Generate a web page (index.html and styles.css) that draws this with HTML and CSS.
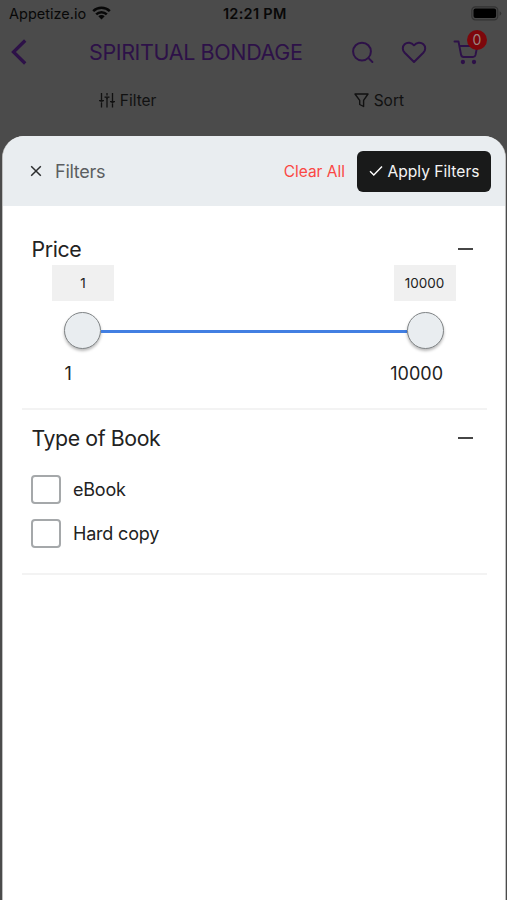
FILE: index.html
```html
<!DOCTYPE html>
<html lang="en">
<head>
<meta charset="utf-8">
<meta name="viewport" content="width=device-width, initial-scale=1">
<title>Spiritual Bondage – Filters</title>
<link rel="stylesheet" href="styles.css">
</head>
<body>
<div class="screen">
  <div class="status">
    <div class="carrier"><span class="carrier-name">Appetize.io</span>
      <svg class="wifi" width="19" height="14" viewBox="0 0 19 14" fill="none" stroke="#080808" stroke-width="2.5"><path d="M1.2 5.2a11.8 11.8 0 0 1 16.6 0M4.2 8.4a7.5 7.5 0 0 1 10.6 0"/><path d="M9.5 13.5 6.3 10.3a4.5 4.5 0 0 1 6.4 0z" fill="#080808" stroke="none"/></svg>
    </div>
    <span class="clock">12:21 PM</span>
    <svg class="battery" width="31" height="15" viewBox="0 0 31 15"><rect x=".8" y=".8" width="26" height="13" rx="3.6" fill="#484848" stroke="#333" stroke-width="1.2"/><rect x="2.5" y="2.6" width="22.6" height="9.4" rx="2" fill="#000"/><path d="M28.6 5.2v4.6q1.7-.8 1.7-2.3t-1.7-2.3z" fill="#333"/></svg>
  </div>
  <div class="nav">
    <svg class="back" width="18" height="28" viewBox="0 0 18 28" fill="none" stroke="#2d1148" stroke-width="3.3"><path d="M15.2 2.5 3.5 14l11.7 11.5"/></svg>
    <h1 class="title">SPIRITUAL BONDAGE</h1>
    <div class="actions">
      <svg width="24" height="24" viewBox="0 0 24 24" fill="none" stroke="#2d1148" stroke-width="2" stroke-linecap="round"><circle cx="11" cy="11.6" r="8.9"/><path d="m17.500 18.100 3.900 3.900"/></svg>
      <svg width="26" height="24" viewBox="0 0 26 24" fill="none" stroke="#2d1148" stroke-width="2" stroke-linejoin="round"><path d="m13 22-9.300-9.200C1.200 10.200 1.200 6.500 3.600 4.300 6.300 1.800 10.500 2.300 13 5.300c2.500-3 6.700-3.500 9.400-1 2.400 2.200 2.400 5.900-.1 8.500z"/></svg>
      <div class="cart">
        <svg width="26" height="26" viewBox="0 0 26 26" fill="none" stroke="#2d1148" stroke-width="1.900" stroke-linecap="round" stroke-linejoin="round"><path d="M1.500 2.500H5.500L8 15.500q.5 2.500 2.500 2.500H20q2 0 2.500-2l1.800-9H6.400"/><circle cx="9.900" cy="23" r="1.200" fill="#2d1148"/><circle cx="21" cy="23" r="1.200" fill="#2d1148"/></svg>
        <span class="badge">0</span>
      </div>
    </div>
  </div>
  <div class="tools">
    <div class="tool">
      <svg width="16" height="15" viewBox="0 0 16 15" fill="none" stroke="#111" stroke-width="1.300"><path d="M2.500 0v7.500M2.500 10v4.500M8 0v2.500M8 5v9.500M13.500 0v8M13.500 10.500v4M0 7.700h5M5.500 4.200h5M11 8.700h5"/><path d="M1 8.200h3L2.500 10zM6.500 4.500h3L8 6.300zM12 9h3l-1.500 1.800z" fill="#111" stroke="none"/></svg>
      <span class="filter-text">Filter</span>
    </div>
    <div class="tool">
      <svg width="15" height="15" viewBox="0 0 15 15" fill="none" stroke="#111" stroke-width="1.400" stroke-linejoin="round"><path d="M1 1h13L9.600 7.300v6.200L5.700 11.500V7.300z"/></svg>
      <span class="sort-text">Sort</span>
    </div>
  </div>
  <main class="sheet">
    <header class="head">
      <svg class="close" width="12" height="12" viewBox="0 0 12 12" fill="none" stroke="#2b2d2e" stroke-width="1.500"><path d="m1.200 1.200 9.600 9.600M10.800 1.200l-9.600 9.600"/></svg>
      <span class="head-title">Filters</span>
      <span class="clear">Clear All</span>
      <div class="apply">
        <svg width="14" height="12" viewBox="0 0 14 12" fill="none" stroke="#fff" stroke-width="1.400"><path d="m1 6.300 3.800 3.800L13 1.500"/></svg>
        <span class="apply-text">Apply Filters</span>
      </div>
    </header>
    <section class="price">
      <div class="section-head"><h2 class="price-title">Price</h2><i class="minus"></i></div>
      <div class="range-values"><span class="value">1</span><span class="value">10000</span></div>
      <div class="slider"><i class="thumb"></i><i class="track"></i><i class="thumb"></i></div>
      <div class="range-labels"><span>1</span><span class="max-label">10000</span></div>
    </section>
    <section class="types">
      <div class="section-head"><h2 class="type-title">Type of Book</h2><i class="minus"></i></div>
      <div class="option"><i class="box"></i><span class="ebook">eBook</span></div>
      <div class="option"><i class="box"></i><span class="hard">Hard copy</span></div>
    </section>
  </main>
</div>
</body>
</html>
```
FILE: styles.css
```css
* { box-sizing: border-box; }
body { margin: 0; background: #4b4b4b; font-family: Inter, "Liberation Sans", sans-serif; }
h1, h2 { margin: 0; font-weight: 400; }
svg { display: block; flex: none; }
span, h1, h2 { white-space: nowrap; }
.screen { height: 900px; padding: 0 1.5px 0 2px; display: flex; flex-direction: column; overflow: hidden; }
.status { height: 28px; display: grid; grid-template-columns: 1fr auto 1fr; align-items: center; padding: 0 4px 0 7px; color: #080808; font-size: 14.500px; }
.carrier { display: flex; align-items: center; gap: 6px; margin-top: -1px; }
.wifi { margin-top: -1px; }
.clock { font-size: 14.500px; font-weight: 600; letter-spacing: .3px; margin: -1px 1px 0 0; }
.battery { justify-self: end; margin-top: -2px; }
.nav { height: 48px; display: flex; align-items: center; padding-left: 8px; }
.back { width: 18px; }
.title { width: 212px; margin-left: 61px; font-size: 21.500px; letter-spacing: -.38px; color: #2d1148; }
.actions { display: flex; align-items: center; margin-left: 50px; gap: 26px; }
.cart { position: relative; }
.badge { position: absolute; left: 14px; top: -9px; width: 20px; height: 20px; border-radius: 50%; background: #7d070b; color: #9b8580; font-size: 14px; line-height: 20px; text-align: center; }
.tools { height: 60px; display: grid; grid-template-columns: 1fr 1fr; padding: 0 1px 11px 0; color: #111; font-size: 15.500px; }
.tool { display: flex; justify-content: center; align-items: center; gap: 5px; }
.sheet { flex: 1; background: #fff; border: 1px solid #bfc0c0; border-width: 0 1px; border-radius: 22px 22px 0 0; overflow: hidden; }
.head { height: 70px; background: #e9edf0; display: flex; align-items: center; padding: 0 14px 0 27px; }
.head-title { margin-left: 13px; font-size: 18px; letter-spacing: -.25px; color: #5b5e61; }
.clear { margin-left: auto; margin-right: 11.500px; color: #fb4744; font-size: 15.500px; }
.apply { width: 134px; height: 41px; border-radius: 6px; background: #191a1a; color: #f4f4f4; display: flex; align-items: center; justify-content: center; gap: 5px; padding-left: 1px; font-size: 15.600px; }
.price { height: 204px; margin: 0 18px 0 19px; padding-top: 27px; border-bottom: 2px solid #f3f3f3; }
.section-head { height: 32px; padding: 0 14px 0 10px; display: flex; align-items: center; justify-content: space-between; color: #222; }
.section-head h2 { font-size: 21.300px; margin-left: -.500px; letter-spacing: -.4px; }
.minus { width: 15px; height: 2px; background: #464646; }
.range-values { display: flex; justify-content: space-between; padding: 0 31px 0 30px; }
.value { width: 62px; height: 36px; background: #f0f0f0; display: flex; align-items: center; justify-content: center; font-size: 13.500px; color: #222; }
.slider { display: flex; align-items: center; height: 37px; margin: 11px 43px 0 42px; }
.thumb { width: 37px; height: 37px; flex: none; border: 1px solid #808486; border-radius: 50%; background: #e9edf0; box-shadow: 0 2px 3px rgba(0,0,0,.28); }
.track { flex: 1; height: 2.500px; margin-top: 2px; background: #427fe2; }
.range-labels { display: flex; justify-content: space-between; margin: 13px 43.500px 0 42.500px; line-height: 24px; font-size: 18px; color: #222; }
.types { height: 165px; margin: 0 18px 0 19px; padding-top: 12px; border-bottom: 2px solid #f3f3f3; }
.option { display: flex; align-items: center; gap: 12px; height: 29px; margin: 21px 0 0 9px; color: #222; font-size: 18px; letter-spacing: -.2px; }
.option + .option { margin-top: 15px; }
.box { width: 30px; height: 29px; border: 2px solid #a5a8aa; border-radius: 4px; }
```
